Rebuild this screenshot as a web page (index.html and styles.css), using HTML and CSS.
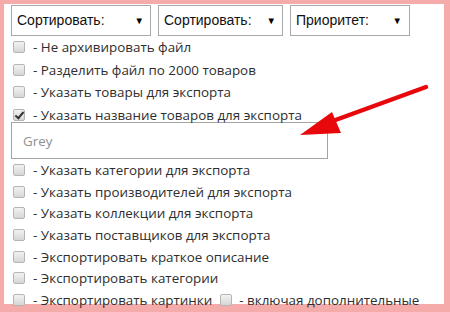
FILE: index.html
```html
<!DOCTYPE html>
<html>
<head>
<meta charset="utf-8">
<link rel="stylesheet" href="styles.css">
</head>
<body>
<div class="panel">
  <div class="selects">
    <div class="sel s1"><span>Сортировать:</span><span class="tri">▼</span></div>
    <div class="sel s2"><span>Сортировать:</span><span class="tri">▼</span></div>
    <div class="sel s3"><span>Приоритет:</span><span class="tri">▼</span></div>
  </div>
  <div class="list top">
    <label class="row"><input type="checkbox"><span>- Не архивировать файл</span></label>
    <label class="row"><input type="checkbox"><span>- Разделить файл по 2000 товаров</span></label>
    <label class="row"><input type="checkbox"><span>- Указать товары для экспорта</span></label>
    <label class="row"><input type="checkbox" checked><span>- Указать название товаров для экспорта</span></label>
  </div>
  <input class="name" type="text" placeholder="Grey">
  <div class="list bottom">
    <label class="row"><input type="checkbox"><span>- Указать категории для экспорта</span></label>
    <label class="row"><input type="checkbox"><span>- Указать производителей для экспорта</span></label>
    <label class="row"><input type="checkbox"><span>- Указать коллекции для экспорта</span></label>
    <label class="row"><input type="checkbox"><span>- Указать поставщиков для экспорта</span></label>
    <label class="row"><input type="checkbox"><span>- Экспортировать краткое описание</span></label>
    <label class="row"><input type="checkbox"><span>- Экспортировать категории</span></label>
    <div class="row"><label class="inline"><input type="checkbox"><span>- Экспортировать картинки</span></label><label class="inline extra"><input type="checkbox"><span>- включая дополнительные</span></label></div>
  </div>
  <svg class="arrow" width="450" height="312" viewBox="0 0 450 312">
    <line x1="426" y1="87" x2="330" y2="122" stroke="#e8080c" stroke-width="4.5" stroke-linecap="round"/>
    <polygon points="300,135 332,112 341,133" fill="#e8080c"/>
  </svg>
</div>
</body>
</html>
```
FILE: styles.css
```css
html, body { margin: 0; padding: 0; }
body {
  width: 450px;
  height: 312px;
  background: #f6abab;
  box-sizing: border-box;
  padding: 4px 6px 8px 4px;
  overflow: hidden;
}
.panel {
  position: relative;
  background: #fff;
  height: 300px;
  box-sizing: border-box;
  padding: 1px 0 0 7px;
  font-family: "Open Sans", sans-serif;
  font-size: 13.4px;
  color: #2e2e2e;
}
.selects {
  display: flex;
  gap: 7px;
  height: 31px;
}
.sel {
  box-sizing: border-box;
  height: 31px;
  border: 1px solid #a9a9a9;
  display: flex;
  align-items: center;
  justify-content: space-between;
  padding: 0 6px 1px 5px;
  font-family: "Liberation Sans", Arial, sans-serif;
  font-size: 14px;
  color: #111;
}
.s1 { width: 140px; }
.s2 { width: 125px; }
.s3 { width: 120px; padding-right: 7px; }
.tri { font-size: 9.5px; color: #000; }
.list { display: flex; flex-direction: column; }
.row {
  display: flex;
  align-items: center;
  height: 22.6px;
  white-space: nowrap;
}
.list.bottom .row { height: 21.6px; flex: none; }
.inline { display: flex; align-items: center; }
.extra { margin-left: 8px; }
input[type=checkbox] {
  -webkit-appearance: none;
  appearance: none;
  width: 12px;
  height: 12px;
  margin: 0 8px 0 2px;
  border: 1px solid #b5b5b5;
  border-radius: 2px;
  background: linear-gradient(#f2f2f2, #d6d6d6);
  box-sizing: border-box;
  position: relative;
  flex: none;
}
.extra input[type=checkbox] { margin-left: 0; margin-right: 7px; }
input[type=checkbox]:checked::after {
  content: "";
  position: absolute;
  left: 3px;
  top: 0px;
  width: 3px;
  height: 7px;
  border: solid #333;
  border-width: 0 2px 2px 0;
  transform: rotate(40deg);
}
.name {
  display: block;
  box-sizing: border-box;
  width: 317px;
  height: 37px;
  margin: -4px 0 0 0;
  border: 1px solid #a5a5a5;
  padding: 0 11px;
  font-family: "Open Sans", sans-serif;
  font-size: 13.4px;
  color: #333;
  outline: none;
}
.name::placeholder { color: #8f8f8f; }
.arrow { position: absolute; left: -4px; top: -4px; pointer-events: none; }
```
